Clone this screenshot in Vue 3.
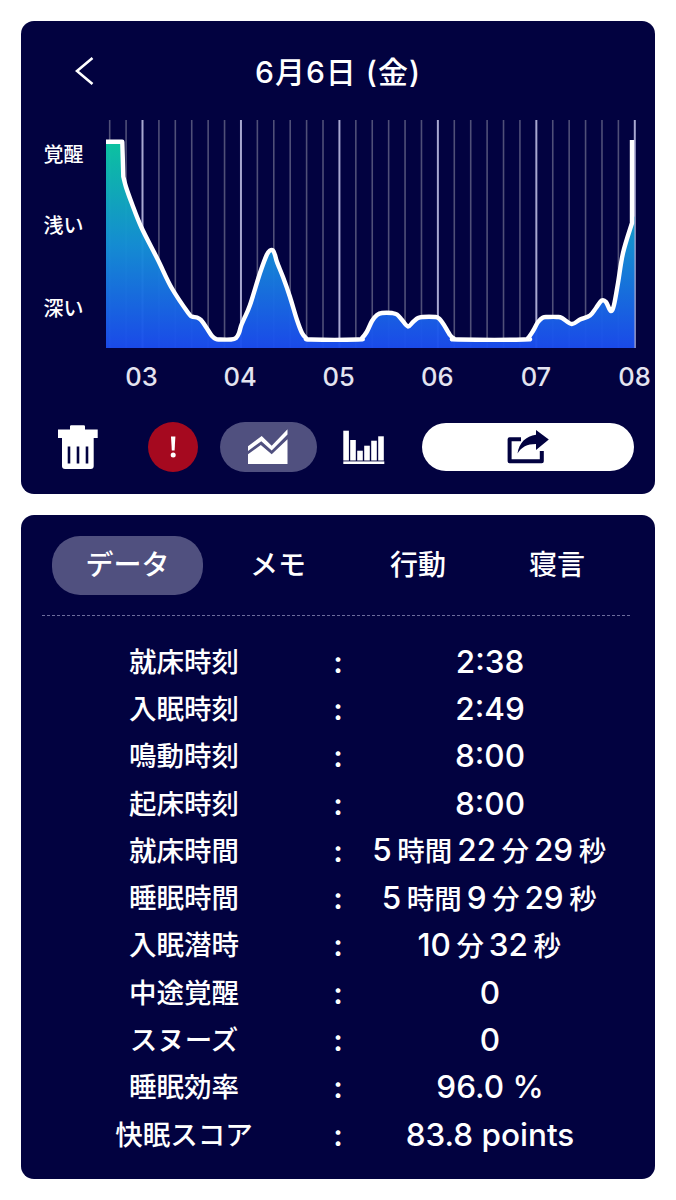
<template>
  <div class="page">
    <section class="card chart-card">
      <header class="chart-head">
        <button class="back" aria-label="back">
          <svg width="20" height="30" viewBox="75 56 20 30">
            <path d="M92.5 58 L77 71 L92.5 84" fill="none" stroke="#fff" stroke-width="2.6" />
          </svg>
        </button>
        <h1 class="date">6月6日 (金)</h1>
      </header>

      <svg class="chart" width="634" height="285" viewBox="21 110 634 285">
        <defs>
          <linearGradient id="sleepFill" gradientUnits="userSpaceOnUse" x1="0" y1="142" x2="0" y2="348">
            <stop offset="0" stop-color="#0cc8a2" />
            <stop offset="0.5" stop-color="#1590d6" />
            <stop offset="1" stop-color="#1b4cee" />
          </linearGradient>
        </defs>
        <line
          v-for="t in ticks"
          :key="t.x"
          :x1="t.x"
          :x2="t.x"
          y1="120"
          y2="348"
          :stroke="t.hour ? '#a8a8d0' : '#505078'"
          :stroke-width="t.hour ? 2 : 1.6"
        />
        <path :d="areaPath" fill="url(#sleepFill)" fill-opacity="0.97" />
        <path :d="linePath" fill="none" stroke="#fff" stroke-width="4.4" stroke-linejoin="round" />
        <text v-for="l in depthLabels" :key="l.text" class="depth" x="63.5" :y="l.y" text-anchor="middle">{{ l.text }}</text>
        <text v-for="h in hourLabels" :key="h.text" class="hour" :x="h.x" y="386" text-anchor="middle">{{ h.text }}</text>
      </svg>

      <div class="actions">
        <svg class="trash" width="40" height="45" viewBox="58 425 40 45">
          <path d="M70 429.5 V426.5 Q70 425.3 71.2 425.3 H83.8 Q85 425.3 85 426.5 V429.5 H97.7 V438 H58 V429.5 Z" fill="#fff" />
          <path d="M62 438 H93.7 V466 Q93.7 469 90.7 469 H65 Q62 469 62 466 Z" fill="#fff" />
          <path d="M69 446.5 V463.5 M78 446.5 V463.5 M87 446.5 V463.5" stroke="#020240" stroke-width="2.6" />
        </svg>

        <div class="alert">
          <svg width="50" height="50" viewBox="148 422 50 50">
            <path d="M171 436.5 H175.4 L174.6 450.5 H171.8 Z" fill="#fff" />
            <circle cx="173.2" cy="455" r="2.5" fill="#fff" />
          </svg>
        </div>

        <div class="trend">
          <svg width="41" height="36" viewBox="248 428 41 36">
            <path d="M248 453.2 L260.8 444 L271.7 453.3 L287.5 438.3 V463 H248 Z" fill="#fff" />
            <path d="M248 445.2 L261.7 435 L271.7 444.8 L287.5 428.3 V433.5 L271.7 449.6 L261.3 440.2 L248 450 Z" fill="#fff" />
          </svg>
        </div>

        <svg class="bars" width="42" height="35" viewBox="343 431 42 35">
          <rect v-for="b in bars" :key="b.x" :x="b.x" :y="b.y" width="5.6" :height="461.5 - b.y" fill="#fff" />
          <rect x="343.3" y="462.4" width="41" height="2.6" fill="#fff" />
        </svg>

        <button class="share" aria-label="share">
          <svg width="42" height="36" viewBox="511 429 42 36">
            <path d="M525 439.2 H513.6 V461.2 H545.8 V451" fill="none" stroke="#020240" stroke-width="4" stroke-linejoin="round" />
            <path d="M521.5 453.5 C523 443 530 436 540 434.8 V430 L552.8 439.5 L540 450 V444 C531 444 525.5 447 521.5 453.5 Z" fill="#020240" />
          </svg>
        </button>
      </div>
    </section>

    <section class="card data-card">
      <nav class="tabs">
        <div v-for="tab in tabs" :key="tab" class="tab" :class="{ active: tab === activeTab }">{{ tab }}</div>
      </nav>

      <div class="divider"></div>

      <dl class="rows">
        <div v-for="row in rows" :key="row.label" class="row">
          <dt>{{ row.label }}</dt>
          <span class="colon">:</span>
          <dd>
            <span v-for="(run, i) in splitRuns(row.value)" :key="i" :class="{ cjk: i % 2 === 1 }">{{ run }}</span>
          </dd>
        </div>
      </dl>
    </section>
  </div>
</template>

<script setup>
import { ref } from "vue";

const activeTab = ref("データ");
const tabs = ["データ", "メモ", "行動", "寝言"];

const rows = [
  { label: "就床時刻", value: "2:38" },
  { label: "入眠時刻", value: "2:49" },
  { label: "鳴動時刻", value: "8:00" },
  { label: "起床時刻", value: "8:00" },
  { label: "就床時間", value: "5時間22分29秒" },
  { label: "睡眠時間", value: "5時間9分29秒" },
  { label: "入眠潜時", value: "10分32秒" },
  { label: "中途覚醒", value: "0" },
  { label: "スヌーズ", value: "0" },
  { label: "睡眠効率", value: "96.0 %" },
  { label: "快眠スコア", value: "83.8 points" },
];

// digits are set larger than the kanji units, odd entries are the kanji runs
const splitRuns = (value) => value.split(/([^\x00-\x7f]+)/);

// grid line every 10 minutes, 03:00 sits at x=142.5
const ticks = [];
for (let i = -2; i <= 30; i++) {
  ticks.push({ x: 142.5 + i * 16.41, hour: i % 6 === 0 });
}

const hourLabels = ["03", "04", "05", "06", "07", "08"].map((text, i) => ({
  text,
  x: 141.5 + i * 98.6,
}));

const depthLabels = [
  { text: "覚醒", y: 162 },
  { text: "浅い", y: 233 },
  { text: "深い", y: 316 },
];

const bars = [
  { x: 343.3, y: 431.7 },
  { x: 350.2, y: 441 },
  { x: 357.2, y: 451.7 },
  { x: 364.2, y: 446.7 },
  { x: 371.2, y: 441.7 },
  { x: 378.2, y: 437.3 },
];

const points = [
  [123.3, 176.7], [126, 187], [131.7, 203], [141.7, 228], [158, 260], [171.7, 288],
  [188.3, 313], [192, 316.5], [197, 317.5], [201, 320], [206.7, 328], [212, 336],
  [216, 339], [220, 339.5], [231, 339.5], [236, 338], [239, 333], [241, 326], [244, 319], [250, 305],
  [260, 273], [266.7, 255], [270, 250.5], [273, 250.5], [275, 255], [277, 262], [283, 277],
  [290, 297], [297, 320], [302, 333], [306, 338], [311, 339.5], [358, 339.5], [362, 338], [366.7, 332],
  [372, 321], [377, 315], [382, 313], [392, 313], [397, 314.5], [402, 320], [408, 326.5], [413, 322],
  [418, 318], [423, 317], [435, 317], [439, 318.5], [444, 325], [450, 335], [454, 338.5], [458, 339.5],
  [524, 339.5], [528, 338], [533, 331], [538, 322], [543, 317.5], [548, 317], [557, 317], [562, 318], [571.7, 324],
  [580, 319.5], [590, 315.5], [596, 308], [601.7, 300.5], [606, 302], [610.7, 311],
  [614, 305], [618, 283], [623, 253], [632, 223],
];

// Catmull-Rom through the sampled points gives the soft curve of the original
const smooth = (pts) => {
  let d = "";
  for (let i = 0; i < pts.length - 1; i++) {
    const p0 = pts[i - 1] || pts[i];
    const p1 = pts[i];
    const p2 = pts[i + 1];
    const p3 = pts[i + 2] || p2;
    const c1x = p1[0] + (p2[0] - p0[0]) / 6;
    const c1y = p1[1] + (p2[1] - p0[1]) / 6;
    const c2x = p2[0] - (p3[0] - p1[0]) / 6;
    const c2y = p2[1] - (p3[1] - p1[1]) / 6;
    d += ` C${c1x.toFixed(1)} ${c1y.toFixed(1)} ${c2x.toFixed(1)} ${c2y.toFixed(1)} ${p2[0]} ${p2[1]}`;
  }
  return d;
};

const curve = smooth(points);
const linePath = `M106 141.8 H122.3 L123.3 176.7${curve} V140`;
const areaPath = `M106 348 V141.8 H122.3 L123.3 176.7${curve} L634.5 216 V348 Z`;
</script>

<style>
body {
  background: #fff;
}
</style>

<style scoped>
.page {
  width: 676px;
  height: 1200px;
  padding: 21px 21px 0;
  box-sizing: border-box;
  font-family: Inter, "Noto Sans CJK JP", sans-serif;
  color: #fff;
}

.card {
  width: 634px;
  background: #020240;
  border-radius: 13px;
}

.chart-card {
  height: 473px;
  margin-bottom: 21px;
}

.chart-head {
  position: relative;
  height: 89px;
  display: flex;
  align-items: center;
  justify-content: center;
  padding-top: 12px;
  box-sizing: border-box;
}

.back {
  position: absolute;
  left: 54px;
  top: 35px;
  padding: 0;
  border: 0;
  background: none;
  display: flex;
}

.date {
  margin: 0;
  font-size: 30px;
  font-weight: 500;
  line-height: 36px;
  letter-spacing: 1px;
}

.chart {
  display: block;
}

.depth {
  font-size: 20px;
  font-weight: 500;
  fill: #fff;
}

.hour {
  font-size: 25.5px;
  font-weight: 500;
  fill: #e4e4f0;
}

.actions {
  display: flex;
  align-items: center;
  height: 50px;
  margin-top: 27px;
  padding-left: 37px;
}

.alert {
  width: 50px;
  height: 50px;
  margin-left: 50px;
  border-radius: 50%;
  background: #a5091f;
  display: flex;
}

.trend {
  width: 97px;
  height: 50px;
  margin-left: 22px;
  border-radius: 25px;
  background: #50507f;
  display: flex;
  align-items: center;
  justify-content: center;
}

.bars {
  margin-left: 26px;
}

.share {
  width: 212px;
  height: 48px;
  margin-left: 37px;
  padding: 0;
  border: 0;
  border-radius: 24px;
  background: #fff;
  display: flex;
  align-items: center;
  justify-content: center;
}

.data-card {
  height: 664px;
  padding: 21px 25px 0 21px;
  box-sizing: border-box;
}

.tabs {
  display: grid;
  grid-template-columns: 151px 150px 130px 148px;
  margin-left: 10px;
}

.tab {
  height: 59px;
  line-height: 59px;
  text-align: center;
  font-size: 28px;
  font-weight: 500;
}

.tab.active {
  background: #50507f;
  border-radius: 28px;
}

.divider {
  margin-top: 20px;
  border-top: 1px dashed #6c6c9c;
}

.rows {
  margin: 22px 0 0;
}

.row {
  display: grid;
  grid-template-columns: 284px 24px 280px;
  height: 47.3px;
  align-items: center;
  text-align: center;
}

dt {
  font-size: 27.5px;
  font-weight: 500;
  line-height: 44px;
}

.colon {
  font-size: 30px;
  font-weight: 600;
  line-height: 44px;
}

dd {
  margin: 0;
  font-size: 31.5px;
  font-weight: 500;
  line-height: 44px;
  text-autospace: normal;
}

.cjk {
  font-size: 27.5px;
  margin: 0 1.5px;
}
</style>
